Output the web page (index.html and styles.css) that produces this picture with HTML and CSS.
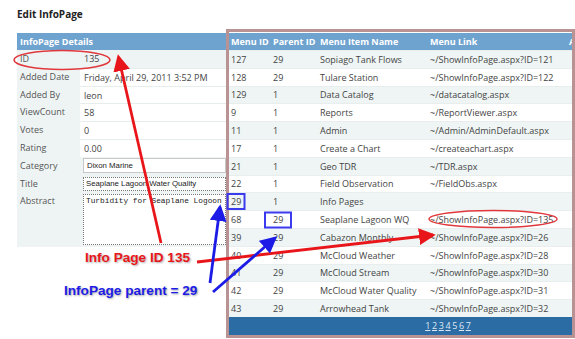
FILE: index.html
```html
<!DOCTYPE html>
<html>
<head>
<meta charset="utf-8">
<link rel="stylesheet" href="styles.css">
</head>
<body>
<div class="page">
  <div class="left">
    <h1 class="title">Edit InfoPage</h1>
    <div class="details">
      <div class="dhead">InfoPage Details</div>
      <div class="drow ro"><span class="lbl">ID</span><span class="val">135</span></div>
      <div class="drow"><span class="lbl">Added Date</span><span class="val">Friday, April 29, 2011 3:52 PM</span></div>
      <div class="drow"><span class="lbl">Added By</span><span class="val">leon</span></div>
      <div class="drow"><span class="lbl">ViewCount</span><span class="val">58</span></div>
      <div class="drow"><span class="lbl">Votes</span><span class="val">0</span></div>
      <div class="drow"><span class="lbl">Rating</span><span class="val">0.00</span></div>
      <div class="drow ro"><span class="lbl">Category</span><span class="val"><span class="select">Dixon Marine</span></span></div>
      <div class="drow ro"><span class="lbl">Title</span><span class="val"><span class="input">Seaplane Lagoon Water Quality</span></span></div>
      <div class="drow ro tall"><span class="lbl">Abstract</span><span class="val"><span class="textarea">Turbidity for Seaplane Logoon</span></span></div>
    </div>
  </div>

  <div class="frame">
    <div class="gridwrap">
      <table class="grid">
        <colgroup><col class="c1"><col class="c2"><col class="c3"><col class="c4"><col class="c5"></colgroup>
        <thead>
          <tr><th>Menu ID</th><th>Parent ID</th><th>Menu Item Name</th><th>Menu Link</th><th>Active</th></tr>
        </thead>
        <tbody>
          <tr><td>127</td><td>29</td><td>Sopiago Tank Flows</td><td>~/ShowInfoPage.aspx?ID=121</td><td></td></tr>
          <tr><td>128</td><td>29</td><td>Tulare Station</td><td>~/ShowInfoPage.aspx?ID=122</td><td></td></tr>
          <tr><td>129</td><td>1</td><td>Data Catalog</td><td>~/datacatalog.aspx</td><td></td></tr>
          <tr><td>9</td><td>1</td><td>Reports</td><td>~/ReportViewer.aspx</td><td></td></tr>
          <tr><td>11</td><td>1</td><td>Admin</td><td>~/Admin/AdminDefault.aspx</td><td></td></tr>
          <tr><td>17</td><td>1</td><td>Create a Chart</td><td>~/createachart.aspx</td><td></td></tr>
          <tr><td>21</td><td>1</td><td>Geo TDR</td><td>~/TDR.aspx</td><td></td></tr>
          <tr><td>22</td><td>1</td><td>Field Observation</td><td>~/FieldObs.aspx</td><td></td></tr>
          <tr><td>29</td><td>1</td><td>Info Pages</td><td></td><td></td></tr>
          <tr><td>68</td><td>29</td><td>Seaplane Lagoon WQ</td><td>~/ShowInfoPage.aspx?ID=135</td><td></td></tr>
          <tr><td>39</td><td>29</td><td>Cabazon Monthly</td><td>~/ShowInfoPage.aspx?ID=26</td><td></td></tr>
          <tr><td>40</td><td>29</td><td>McCloud Weather</td><td>~/ShowInfoPage.aspx?ID=28</td><td></td></tr>
          <tr><td>41</td><td>29</td><td>McCloud Stream</td><td>~/ShowInfoPage.aspx?ID=30</td><td></td></tr>
          <tr><td>42</td><td>29</td><td>McCloud Water Quality</td><td>~/ShowInfoPage.aspx?ID=31</td><td></td></tr>
          <tr><td>43</td><td>29</td><td>Arrowhead Tank</td><td>~/ShowInfoPage.aspx?ID=32</td><td></td></tr>
        </tbody>
      </table>
      <div class="pager"><a>1</a><a>2</a><a>3</a><a>4</a><span>5</span><a>6</a><a>7</a></div>
    </div>
  </div>

  <svg class="overlay" width="575" height="339" viewBox="0 0 575 339">
    <defs>
      <marker id="rh" markerWidth="6" markerHeight="6" refX="5" refY="3" orient="auto" markerUnits="strokeWidth">
        <path d="M0,0 L6,3 L0,6 Z" fill="#e8161a"/>
      </marker>
      <marker id="bh" markerWidth="6" markerHeight="6" refX="5" refY="3" orient="auto" markerUnits="strokeWidth">
        <path d="M0,0 L6,3 L0,6 Z" fill="#1c1ce6"/>
      </marker>
    </defs>
    <ellipse cx="62" cy="60" rx="48" ry="9.5" fill="none" stroke="#e0383c" stroke-width="1.6"/>
    <ellipse cx="493" cy="219" rx="64" ry="8.5" fill="none" stroke="#e0383c" stroke-width="1.4"/>
    <rect x="227.5" y="194" width="17" height="15" fill="none" stroke="#3a3aee" stroke-width="2"/>
    <rect x="265" y="212.5" width="26" height="15" fill="none" stroke="#3a3aee" stroke-width="2"/>
    <line x1="161" y1="243" x2="118.5" y2="57" stroke="#e8161a" stroke-width="2.8" marker-end="url(#rh)"/>
    <line x1="197" y1="262" x2="433" y2="235" stroke="#e8161a" stroke-width="2.8" marker-end="url(#rh)"/>
    <line x1="210" y1="283" x2="220" y2="207" stroke="#1c1ce6" stroke-width="2.8" marker-end="url(#bh)"/>
    <line x1="213" y1="292" x2="275" y2="238" stroke="#1c1ce6" stroke-width="2.8" marker-end="url(#bh)"/>
  </svg>
  <div class="callout red">Info Page ID 135</div>
  <div class="callout blue">InfoPage parent = 29</div>
</div>
</body>
</html>
```

FILE: styles.css
```css
html, body {
  margin: 0;
  padding: 0;
  background: #ffffff;
}

body {
  font-family: "Open Sans", "DejaVu Sans", sans-serif;
  font-size: 9px;
  color: #444;
}

.page {
  position: relative;
  display: flex;
  width: 575px;
  height: 339px;
  overflow: hidden;
}

.left {
  flex: none;
  margin-left: 17px;
  width: 209px;
}

.title {
  margin: 0;
  height: 33px;
  padding-top: 8px;
  box-sizing: border-box;
  font-size: 10px;
  line-height: 13px;
  font-weight: bold;
  color: #222;
}

.details {
  background: #eef4f4;
  padding-bottom: 1px;
}

.dhead {
  height: 17px;
  line-height: 17px;
  padding-left: 3px;
  background: #6fa3cf;
  color: #fff;
  font-weight: bold;
}

.drow {
  display: flex;
  height: 17.8px;
}

.drow.tall {
  height: 54px;
}

.lbl {
  flex: none;
  width: 60px;
  padding-left: 3px;
  line-height: 17.8px;
  color: #555;
}

.val {
  flex: 1;
  min-width: 0;
  box-sizing: border-box;
  padding-left: 4px;
  line-height: 17px;
  background: #fff;
  border-top: 1px solid #e6eded;
  white-space: nowrap;
  overflow: hidden;
}

.drow.ro .val {
  background: transparent;
  border-top: none;
  line-height: 17.8px;
}

.drow.ro .val:has(.select),
.drow.ro .val:has(.input),
.drow.ro .val:has(.textarea) {
  padding-left: 3px;
  display: flex;
  align-items: flex-start;
}

.select {
  display: block;
  width: 100%;
  margin-top: 1px;
  height: 15px;
  line-height: 14px;
  box-sizing: border-box;
  padding-left: 3px;
  background: #fff;
  border: 1px solid #c8c8c8;
  font-family: "Liberation Sans", sans-serif;
  font-size: 7.8px;
  color: #222;
}

.input {
  display: block;
  width: 100%;
  margin-top: 2px;
  height: 14px;
  line-height: 12px;
  box-sizing: border-box;
  padding-left: 2px;
  background: #fff;
  border: 1px dotted #777;
  font-family: "Liberation Sans", sans-serif;
  font-size: 7.8px;
  color: #222;
}

.textarea {
  display: block;
  width: 100%;
  margin-top: 2px;
  height: 51px;
  box-sizing: border-box;
  padding: 1px 2px;
  line-height: 10px;
  background: #fff;
  border: 1px dotted #777;
  font-family: "Liberation Mono", monospace;
  font-size: 7.8px;
  color: #222;
}

/* right frame */
.frame {
  flex: none;
  margin-top: 29px;
  width: 349px;
  height: 309px;
  box-sizing: border-box;
  border: 3px solid #b99294;
  padding-top: 1px;
  background: #fff;
  overflow: hidden;
}

.gridwrap {
  width: 438px;
}

.grid {
  width: 438px;
  table-layout: fixed;
  border-collapse: collapse;
}

.c1 { width: 42px; }
.c2 { width: 47px; }
.c3 { width: 110px; }
.c4 { width: 139px; }
.c5 { width: 100px; }

.grid th {
  height: 17px;
  padding: 0 0 0 2px;
  text-align: left;
  background: #6fa3cf;
  color: #fff;
  font-weight: bold;
  white-space: nowrap;
}

.grid td {
  height: 17.8px;
  padding: 0 0 0 2px;
  white-space: nowrap;
  overflow: hidden;
  color: #444;
  border-top: 1px solid #e8eeee;
  box-sizing: border-box;
}

.grid tbody tr:nth-child(odd) td {
  background: #eef5f4;
}

.grid tbody tr:nth-child(even) td {
  background: #fff;
}

.pager {
  height: 18px;
  line-height: 18px;
  background: #2b6ca4;
  text-align: center;
  color: #dfe9f3;
  font-size: 9px;
}

.pager a,
.pager span {
  margin: 0 0.8px;
}

.pager a {
  text-decoration: underline;
}

/* annotations */
.overlay {
  position: absolute;
  left: 0;
  top: 0;
  pointer-events: none;
}

.callout {
  position: absolute;
  font-family: "Liberation Sans", Arial, sans-serif;
  font-weight: bold;
  font-size: 13.6px;
  white-space: nowrap;
  text-shadow: 1px 1px 2px rgba(0, 0, 0, 0.35);
}

.callout.red {
  left: 85px;
  top: 250px;
  color: #e8161a;
}

.callout.blue {
  left: 64px;
  top: 283px;
  color: #1c1ce6;
}
```
